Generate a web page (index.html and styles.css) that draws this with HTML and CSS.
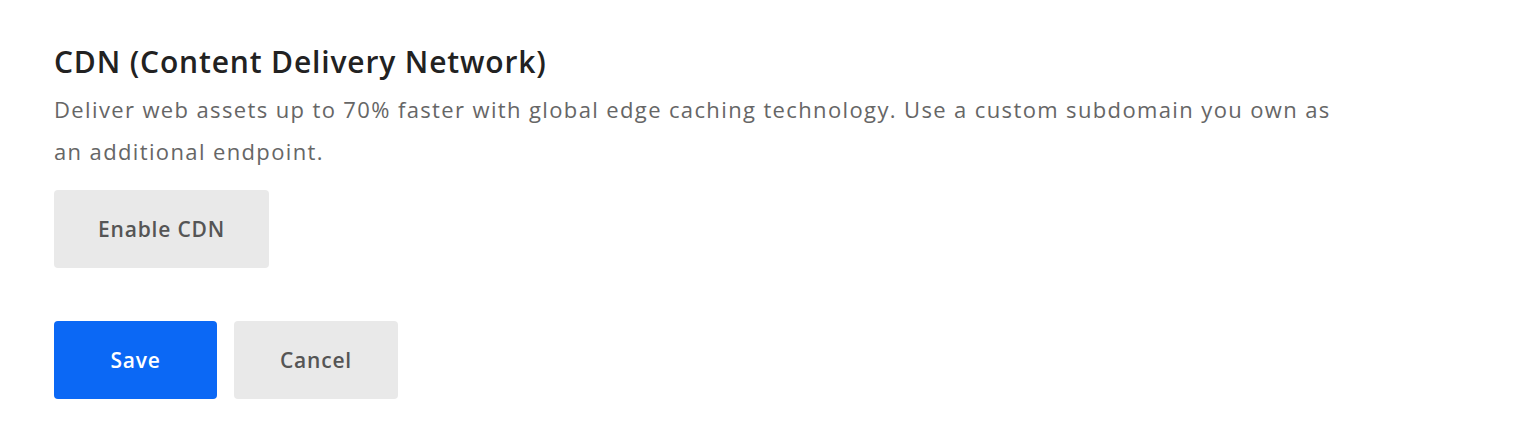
FILE: index.html
```html
<!DOCTYPE html>
<html lang="en">
<head>
    <meta charset="UTF-8">
    <meta name="viewport" content="width=device-width, initial-scale=1.0">
    <title>CDN Settings</title>
    <link rel="stylesheet" href="styles.css">
</head>
<body>
    <div class="container">
        <h2>CDN (Content Delivery Network)</h2>
        <p class="description">Deliver web assets up to 70% faster with global edge caching technology. Use a custom subdomain you own as an additional endpoint.</p>

        <button class="btn btn-secondary btn-enable">Enable CDN</button>

        <div class="button-container">
            <button class="btn btn-primary">Save</button>
            <button class="btn btn-secondary">Cancel</button>
        </div>
    </div>
</body>
</html>
```

FILE: styles.css
```css
body {
    font-family: "Open Sans", Lato, sans-serif;
    background-color: #fff;
    margin: 0;
    padding: 0;
}

.container {
    padding: 42px 54px;
    max-width: 1300px;
}

h2 {
    color: #222;
    font-size: 30px;
    font-weight: 600;
    letter-spacing: 0.85px;
    line-height: 40px;
    margin: 0 0 6px;
}

.description {
    color: #666;
    font-size: 22px;
    letter-spacing: 1.37px;
    line-height: 42px;
    max-width: 1300px;
    margin: 0 0 18px;
}

.btn {
    font-family: inherit;
    font-size: 21px;
    font-weight: 600;
    letter-spacing: 0.8px;
    height: 78px;
    border: none;
    border-radius: 4px;
    cursor: pointer;
}

.btn-primary {
    background-color: #0b68f5;
    color: #fff;
    width: 163px;
}

.btn-secondary {
    background-color: #e9e9e9;
    color: #555;
    width: 164px;
}

.btn-enable {
    width: 215px;
    display: block;
}

.button-container {
    display: flex;
    gap: 17px;
    margin-top: 53px;
}
```
